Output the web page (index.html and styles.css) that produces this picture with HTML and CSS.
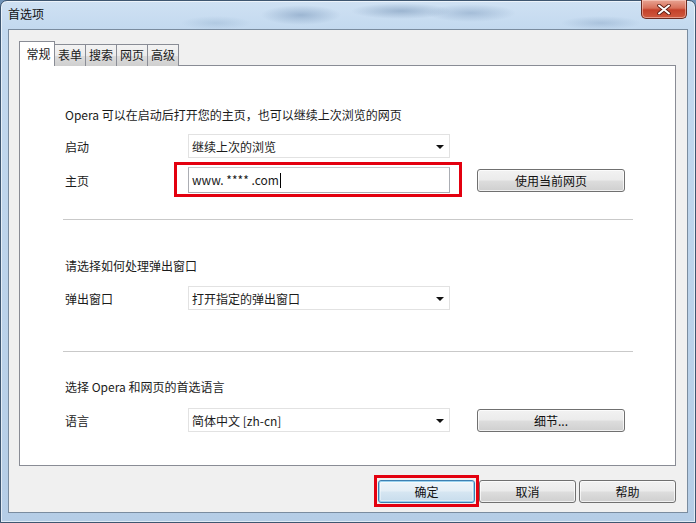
FILE: index.html
```html
<!DOCTYPE html>
<html lang="zh-CN">
<head>
<meta charset="utf-8">
<title>首选项</title>
<link rel="stylesheet" href="styles.css">
</head>
<body>
<div class="window">
  <div class="titlebar">
    <span class="title">首选项</span>
    <div class="close" aria-label="关闭">
      <svg width="14" height="11" viewBox="0 0 14 11"><path d="M2 1.5 L12 9.5 M12 1.5 L2 9.5" stroke="#5a1a10" stroke-width="3.6" stroke-linecap="round"/><path d="M2 1.5 L12 9.5 M12 1.5 L2 9.5" stroke="#fff" stroke-width="2" stroke-linecap="round"/></svg>
    </div>
  </div>
  <div class="client">
    <div class="tabs">
      <div class="tab active">常规</div>
      <div class="tab">表单</div>
      <div class="tab">搜索</div>
      <div class="tab">网页</div>
      <div class="tab">高级</div>
    </div>
    <div class="panel">
      <p class="intro intro-1">Opera 可以在启动后打开您的主页，也可以继续上次浏览的网页</p>
      <div class="row row-start">
        <span class="label">启动</span>
        <div class="select"><span>继续上次的浏览</span><i class="arrow"></i></div>
      </div>
      <div class="row row-home">
        <span class="label">主页</span>
        <div class="input-wrap">
          <div class="input">www. **** .com<span class="caret"></span></div>
        </div>
        <div class="btn btn-side">使用当前网页</div>
      </div>
      <hr class="sep sep-1">
      <p class="intro intro-2">请选择如何处理弹出窗口</p>
      <div class="row row-popup">
        <span class="label">弹出窗口</span>
        <div class="select"><span>打开指定的弹出窗口</span><i class="arrow"></i></div>
      </div>
      <hr class="sep sep-2">
      <p class="intro intro-3">选择 Opera 和网页的首选语言</p>
      <div class="row row-lang">
        <span class="label">语言</span>
        <div class="select"><span>简体中文 [zh-cn]</span><i class="arrow"></i></div>
        <div class="btn btn-side">细节...</div>
      </div>
    </div>
    <div class="footer">
      <div class="btn btn-foot btn-default">确定</div>
      <div class="btn btn-foot">取消</div>
      <div class="btn btn-foot">帮助</div>
    </div>
  </div>
</div>
</body>
</html>
```

FILE: styles.css
```css
* { box-sizing: border-box; }
html, body { margin: 0; padding: 0; }
body {
  width: 696px;
  height: 523px;
  overflow: hidden;
  background: #6f93b8;
  font-family: "Noto Sans CJK SC", "Microsoft YaHei", sans-serif;
  font-size: 12px;
  color: #1b1b1b;
}
.window {
  width: 696px;
  height: 523px;
  border: 1px solid #3e5670;
  border-radius: 7px 7px 0 0;
  padding: 0 7px 9px 7px;
  display: flex;
  flex-direction: column;
  background:
    radial-gradient(ellipse 40px 10px at 300px 14px, rgba(120,150,185,0.55), transparent),
    radial-gradient(ellipse 50px 8px at 400px 10px, rgba(110,140,175,0.5), transparent),
    radial-gradient(ellipse 45px 9px at 470px 12px, rgba(120,150,185,0.45), transparent),
    radial-gradient(ellipse 40px 7px at 600px 22px, rgba(120,150,185,0.35), transparent),
    radial-gradient(ellipse 35px 7px at 215px 22px, rgba(140,170,200,0.35), transparent),
    linear-gradient(to bottom, #cfe1f3 0px, #c3d9ef 28px, #b5cde6 100%);
  box-shadow: inset 0 0 0 1px rgba(255,255,255,0.6);
}
.titlebar {
  height: 28px;
  display: flex;
  align-items: flex-start;
  justify-content: space-between;
}
.title {
  margin-top: 5px;
  color: #111;
  font-size: 12px;
  line-height: 16px;
}
.close {
  width: 46px;
  height: 19px;
  margin-top: -1px;
  margin-right: 1px;
  border: 1px solid #6b2b21;
  border-top: none;
  border-radius: 0 0 5px 5px;
  background: linear-gradient(to bottom, #e8a493 0%, #d8705a 45%, #c4412a 55%, #cf5a3f 100%);
  box-shadow: inset 0 0 0 1px rgba(255,220,210,0.5);
  display: flex;
  align-items: center;
  justify-content: center;
}
.client {
  flex: 1;
  background: #f0f0f0;
  border: 1px solid #7a8c9f;
  padding: 11px 11px 0 10px;
  display: flex;
  flex-direction: column;
}
.tabs {
  display: flex;
  align-items: flex-end;
  height: 25px;
  margin-bottom: -1px;
  position: relative;
  z-index: 1;
}
.tab {
  height: 22px;
  width: 32px;
  margin-left: -1px;
  border: 1px solid #898c95;
  border-bottom: none;
  background: linear-gradient(to bottom, #f3f3f3 0%, #ebebeb 50%, #dddddd 51%, #cfcfcf 100%);
  text-align: center;
  line-height: 20px;
  font-size: 12px;
}
.tab.active {
  height: 25px;
  width: 36px;
  margin-left: 0;
  margin-right: -1px;
  background: #fff;
  line-height: 23px;
  padding-left: 3px;
  position: relative;
  z-index: 2;
}
.tab.active + .tab { margin-left: 0; }
.panel {
  width: 657px;
  height: 401px;
  background: #fff;
  border: 1px solid #898c95;
  padding: 0 42px 0 43px;
}
.intro {
  margin: 0;
  padding-left: 2px;
  line-height: 16px;
  height: 16px;
}
.intro-1 { margin-top: 41px; }
.intro-2 { margin-top: 38px; }
.intro-3 { margin-top: 27px; }
.row {
  display: flex;
  align-items: center;
  padding-left: 2px;
}
.row-start { margin-top: 11px; height: 24px; }
.row-home { margin-top: 9px; height: 26px; }
.row-popup { margin-top: 12px; height: 24px; }
.row-lang { margin-top: 13px; height: 24px; }
.label {
  width: 123px;
  flex: none;
}
.select {
  width: 262px;
  height: 24px;
  flex: none;
  border: 1px solid #e2e2e2;
  background: #fff;
  display: flex;
  align-items: center;
  justify-content: space-between;
  padding: 0 5px 0 3px;
}
.arrow {
  width: 0;
  height: 0;
  border-left: 4px solid transparent;
  border-right: 4px solid transparent;
  border-top: 4px solid #111;
  margin-top: 1px;
}
.input-wrap {
  position: relative;
  flex: none;
}
.input-wrap::after {
  content: "";
  position: absolute;
  left: -14px;
  top: -5px;
  right: -12px;
  bottom: -4px;
  border: 3px solid #e3000f;
  pointer-events: none;
}
.input {
  width: 262px;
  height: 26px;
  border: 1px solid #abadb3;
  border-top-color: #c8cacf;
  background: #fff;
  padding: 0 3px;
  line-height: 24px;
  display: flex;
  align-items: center;
  color: #1b1b1b;
}
.caret {
  display: inline-block;
  width: 1px;
  height: 15px;
  background: #000;
  margin-left: 1px;
}
.btn {
  height: 23px;
  border: 1px solid #707070;
  border-radius: 3px;
  background: linear-gradient(to bottom, #f2f2f2 0%, #ebebeb 48%, #dddddd 52%, #cfcfcf 100%);
  box-shadow: inset 0 0 0 1px rgba(255,255,255,0.7);
  display: flex;
  align-items: center;
  justify-content: center;
  color: #111;
  flex: none;
}
.btn-side {
  width: 148px;
  margin-left: 27px;
}
.row-lang .btn-side { margin-top: 1px; }
.footer {
  display: flex;
  justify-content: flex-end;
  gap: 3px;
  margin-top: 14px;
  padding-right: 0;
}
.btn-foot {
  width: 97px;
}
.btn-default {
  position: relative;
  border-color: #3c7fb1;
  box-shadow: inset 0 0 0 1px #98d1ef, inset 0 0 0 2px rgba(255,255,255,0.4);
  background: linear-gradient(to bottom, #ecf4f9 0%, #e4eef6 48%, #d6e6f2 52%, #c7dcec 100%);
  margin-right: 1px;
}
.btn-default::after {
  content: "";
  position: absolute;
  left: -5px;
  top: -6px;
  right: -5px;
  bottom: -5px;
  border: 3px solid #e3000f;
  pointer-events: none;
}
.sep {
  border: none;
  height: 1px;
  background: #c9c9c9;
  margin: 0;
  width: 570px;
}
.sep-1 { margin-top: 26px; }
.sep-2 { margin-top: 41px; }
```
